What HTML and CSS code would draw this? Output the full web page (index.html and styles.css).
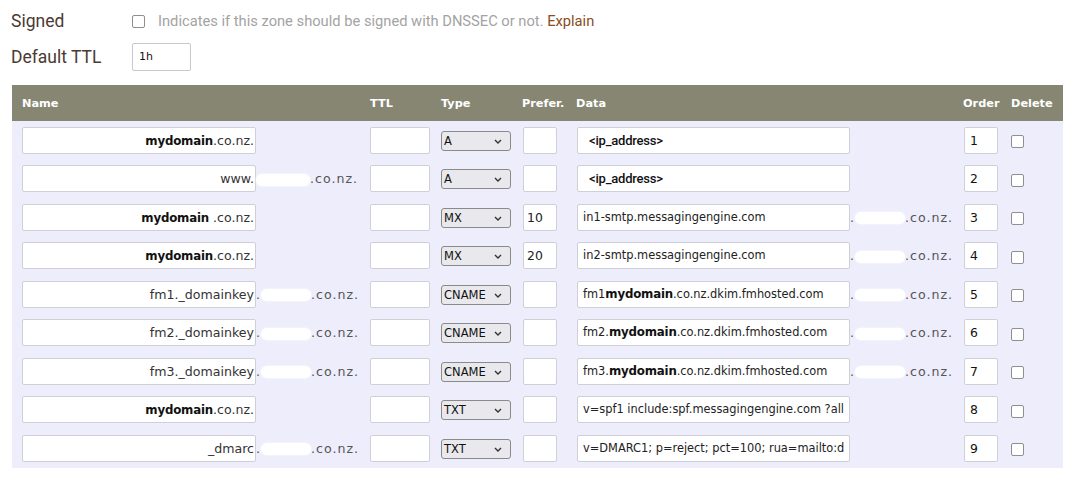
FILE: index.html
```html
<!DOCTYPE html>
<html>
<head>
  <meta charset="UTF-8">
  <title>Zone records</title>
  <link rel="stylesheet" href="styles.css">
</head>
<body>
  <div class="zone-opts">
    <div class="opt-row">
      <label class="opt-label">Signed</label>
      <input type="checkbox" class="check">
      <span class="opt-help">Indicates if this zone should be signed with DNSSEC or not. <a href="#" class="explain">Explain</a></span>
    </div>
    <div class="opt-row">
      <label class="opt-label">Default TTL</label>
      <div class="field ttl-default">1h</div>
    </div>
  </div>

  <table class="records">
    <colgroup>
      <col class="c-name"><col class="c-ttl"><col class="c-type"><col class="c-pref"><col class="c-data"><col class="c-order"><col class="c-del">
    </colgroup>
    <thead>
      <tr>
        <th class="th-name">Name</th>
        <th>TTL</th>
        <th>Type</th>
        <th>Prefer.</th>
        <th>Data</th>
        <th>Order</th>
        <th>Delete</th>
      </tr>
    </thead>
    <tbody>
      <tr>
        <td class="td-name"><div class="field name"><b class="pasted">mydomain</b>.co.nz.</div></td>
        <td><div class="field ttl"></div></td>
        <td><span class="sel">A<svg class="chev" viewBox="0 0 8 5"><path d="M1 1l3 3 3-3"/></svg></span></td>
        <td><div class="field pref"></div></td>
        <td><div class="field data"><span class="ip">&lt;ip_address&gt;</span></div></td>
        <td><div class="field order">1</div></td>
        <td><input type="checkbox" class="check"></td>
      </tr>
      <tr>
        <td class="td-name"><div class="field name">www.</div><span class="suffix"><span class="redact r-name"></span>.co.nz.</span></td>
        <td><div class="field ttl"></div></td>
        <td><span class="sel">A<svg class="chev" viewBox="0 0 8 5"><path d="M1 1l3 3 3-3"/></svg></span></td>
        <td><div class="field pref"></div></td>
        <td><div class="field data"><span class="ip">&lt;ip_address&gt;</span></div></td>
        <td><div class="field order">2</div></td>
        <td><input type="checkbox" class="check"></td>
      </tr>
      <tr>
        <td class="td-name"><div class="field name"><b class="pasted">mydomain</b> .co.nz.</div></td>
        <td><div class="field ttl"></div></td>
        <td><span class="sel">MX<svg class="chev" viewBox="0 0 8 5"><path d="M1 1l3 3 3-3"/></svg></span></td>
        <td><div class="field pref">10</div></td>
        <td><div class="field data">in1-smtp.messagingengine.com</div><span class="suffix">.<span class="redact r-data"></span>.co.nz.</span></td>
        <td><div class="field order">3</div></td>
        <td><input type="checkbox" class="check"></td>
      </tr>
      <tr>
        <td class="td-name"><div class="field name"><b class="pasted">mydomain</b>.co.nz.</div></td>
        <td><div class="field ttl"></div></td>
        <td><span class="sel">MX<svg class="chev" viewBox="0 0 8 5"><path d="M1 1l3 3 3-3"/></svg></span></td>
        <td><div class="field pref">20</div></td>
        <td><div class="field data">in2-smtp.messagingengine.com</div><span class="suffix">.<span class="redact r-data"></span>.co.nz.</span></td>
        <td><div class="field order">4</div></td>
        <td><input type="checkbox" class="check"></td>
      </tr>
      <tr>
        <td class="td-name"><div class="field name">fm1._domainkey</div><span class="suffix">.<span class="redact r-key"></span>.co.nz.</span></td>
        <td><div class="field ttl"></div></td>
        <td><span class="sel">CNAME<svg class="chev" viewBox="0 0 8 5"><path d="M1 1l3 3 3-3"/></svg></span></td>
        <td><div class="field pref"></div></td>
        <td><div class="field data">fm1<b class="pasted">mydomain</b>.co.nz.dkim.fmhosted.com</div><span class="suffix">.<span class="redact r-data"></span>.co.nz.</span></td>
        <td><div class="field order">5</div></td>
        <td><input type="checkbox" class="check"></td>
      </tr>
      <tr>
        <td class="td-name"><div class="field name">fm2._domainkey</div><span class="suffix">.<span class="redact r-key"></span>.co.nz.</span></td>
        <td><div class="field ttl"></div></td>
        <td><span class="sel">CNAME<svg class="chev" viewBox="0 0 8 5"><path d="M1 1l3 3 3-3"/></svg></span></td>
        <td><div class="field pref"></div></td>
        <td><div class="field data">fm2.<b class="pasted">mydomain</b>.co.nz.dkim.fmhosted.com</div><span class="suffix">.<span class="redact r-data"></span>.co.nz.</span></td>
        <td><div class="field order">6</div></td>
        <td><input type="checkbox" class="check"></td>
      </tr>
      <tr>
        <td class="td-name"><div class="field name">fm3._domainkey</div><span class="suffix">.<span class="redact r-key"></span>.co.nz.</span></td>
        <td><div class="field ttl"></div></td>
        <td><span class="sel">CNAME<svg class="chev" viewBox="0 0 8 5"><path d="M1 1l3 3 3-3"/></svg></span></td>
        <td><div class="field pref"></div></td>
        <td><div class="field data">fm3.<b class="pasted">mydomain</b>.co.nz.dkim.fmhosted.com</div><span class="suffix">.<span class="redact r-data"></span>.co.nz.</span></td>
        <td><div class="field order">7</div></td>
        <td><input type="checkbox" class="check"></td>
      </tr>
      <tr>
        <td class="td-name"><div class="field name"><b class="pasted">mydomain</b>.co.nz.</div></td>
        <td><div class="field ttl"></div></td>
        <td><span class="sel">TXT<svg class="chev" viewBox="0 0 8 5"><path d="M1 1l3 3 3-3"/></svg></span></td>
        <td><div class="field pref"></div></td>
        <td><div class="field data">v=spf1 include:spf.messagingengine.com ?all</div></td>
        <td><div class="field order">8</div></td>
        <td><input type="checkbox" class="check"></td>
      </tr>
      <tr>
        <td class="td-name"><div class="field name">_dmarc</div><span class="suffix">.<span class="redact r-key"></span>.co.nz.</span></td>
        <td><div class="field ttl"></div></td>
        <td><span class="sel">TXT<svg class="chev" viewBox="0 0 8 5"><path d="M1 1l3 3 3-3"/></svg></span></td>
        <td><div class="field pref"></div></td>
        <td><div class="field data">v=DMARC1; p=reject; pct=100; rua=mailto:d</div></td>
        <td><div class="field order">9</div></td>
        <td><input type="checkbox" class="check"></td>
      </tr>
    </tbody>
  </table>
</body>
</html>
```

FILE: styles.css
```css
* {
  box-sizing: border-box;
}

body {
  margin: 0;
  padding: 0 16px 0 11px;
  background: #ffffff;
  font-family: Roboto, "Liberation Sans", sans-serif;
}

/* Zone options */
.zone-opts {
  padding-top: 7px;
}

.opt-row {
  display: flex;
  align-items: center;
  height: 28px;
}

.opt-row + .opt-row {
  margin-top: 8px;
}

.opt-label {
  width: 121px;
  font-size: 17.5px;
  color: #4b3a33;
}

.opt-help {
  margin-left: 13px;
  font-size: 14.7px;
  color: #a3a3a3;
}

.explain {
  color: #8a4c22;
  text-decoration: none;
}

.check {
  width: 13px;
  height: 13px;
  margin: 0;
  appearance: none;
  border: 1px solid #8f8f8f;
  border-radius: 2px;
  background: #fff;
}

/* Inputs */
.field {
  height: 27px;
  background: #fff;
  border: 1px solid #cfcfd8;
  border-radius: 2px;
  font-family: "DejaVu Sans", Tahoma, sans-serif;
  font-size: 11.2px;
  line-height: 25px;
  color: #222;
  white-space: nowrap;
  overflow: hidden;
}

.ttl-default {
  width: 59px;
  height: 28px;
  padding-left: 6px;
  font-size: 11px;
  color: #111;
  border-color: #c9c9c9;
}

/* Records table */
.records {
  width: 1051px;
  margin-left: 1px;
  margin-top: 14px;
  border-collapse: collapse;
  table-layout: fixed;
  background: #ededfb;
}

.c-name { width: 358px; }
.c-ttl { width: 71px; }
.c-type { width: 81px; }
.c-pref { width: 54px; }
.c-data { width: 387px; }
.c-order { width: 48px; }
.c-del { width: 52px; }

.records th {
  height: 36px;
  background: #878672;
  color: #ffffff;
  font-family: "DejaVu Sans", Tahoma, sans-serif;
  font-size: 11.3px;
  font-weight: 700;
  text-align: left;
  padding: 0;
}

.records th.th-name {
  padding-left: 10px;
}

.records td {
  height: 38.5px;
  padding: 0;
  vertical-align: middle;
  white-space: nowrap;
}

.records td.td-name {
  padding-left: 10px;
}

.records td > .field,
.records td > .suffix {
  display: inline-block;
  vertical-align: middle;
}

.name {
  width: 234px;
  text-align: right;
  padding-right: 1px;
  font-size: 12.6px;
  color: #333;
}

.ttl { width: 60px; }

.pref {
  width: 34px;
  margin-left: 1px;
  padding-left: 3px;
  font-size: 12.4px;
}

.data {
  width: 273px;
  margin-left: 1px;
  padding-left: 5px;
  font-size: 11.4px;
}

.order {
  width: 34px;
  margin-left: 1px;
  padding-left: 5px;
  font-size: 12.4px;
  color: #111;
}

.ip {
  font-family: Roboto, "Liberation Sans", sans-serif;
  font-size: 13px;
  font-weight: 500;
  letter-spacing: -0.2px;
  padding-left: 6px;
  color: #111;
}

.pasted {
  font-family: "DejaVu Sans", Tahoma, sans-serif;
  font-size: 11.8px;
  font-weight: 700;
  color: #111;
  letter-spacing: -0.2px;
}

.suffix {
  font-family: "DejaVu Sans", Tahoma, sans-serif;
  font-size: 12.6px;
  letter-spacing: 1px;
  color: #555;
}

.redact {
  display: inline-block;
  height: 12px;
  vertical-align: middle;
  background: #ffffff;
  border-radius: 6px;
  box-shadow: 0 0 3px #fff;
}

.r-name { width: 54px; }
.r-key { width: 50px; }
.r-data { width: 50px; }

/* Fake select */
.sel {
  position: relative;
  display: inline-block;
  vertical-align: middle;
  width: 70px;
  height: 20px;
  padding-left: 2px;
  background: #e9e9ed;
  border: 1px solid #8a8a8a;
  border-radius: 3px;
  font-family: "DejaVu Sans", Tahoma, sans-serif;
  font-size: 11.5px;
  line-height: 18px;
  color: #111;
}

.chev {
  position: absolute;
  right: 8px;
  top: 7px;
  width: 8px;
  height: 5px;
  fill: none;
  stroke: #333;
  stroke-width: 1.4;
}

.records td > .check {
  display: inline-block;
  vertical-align: middle;
}
```
